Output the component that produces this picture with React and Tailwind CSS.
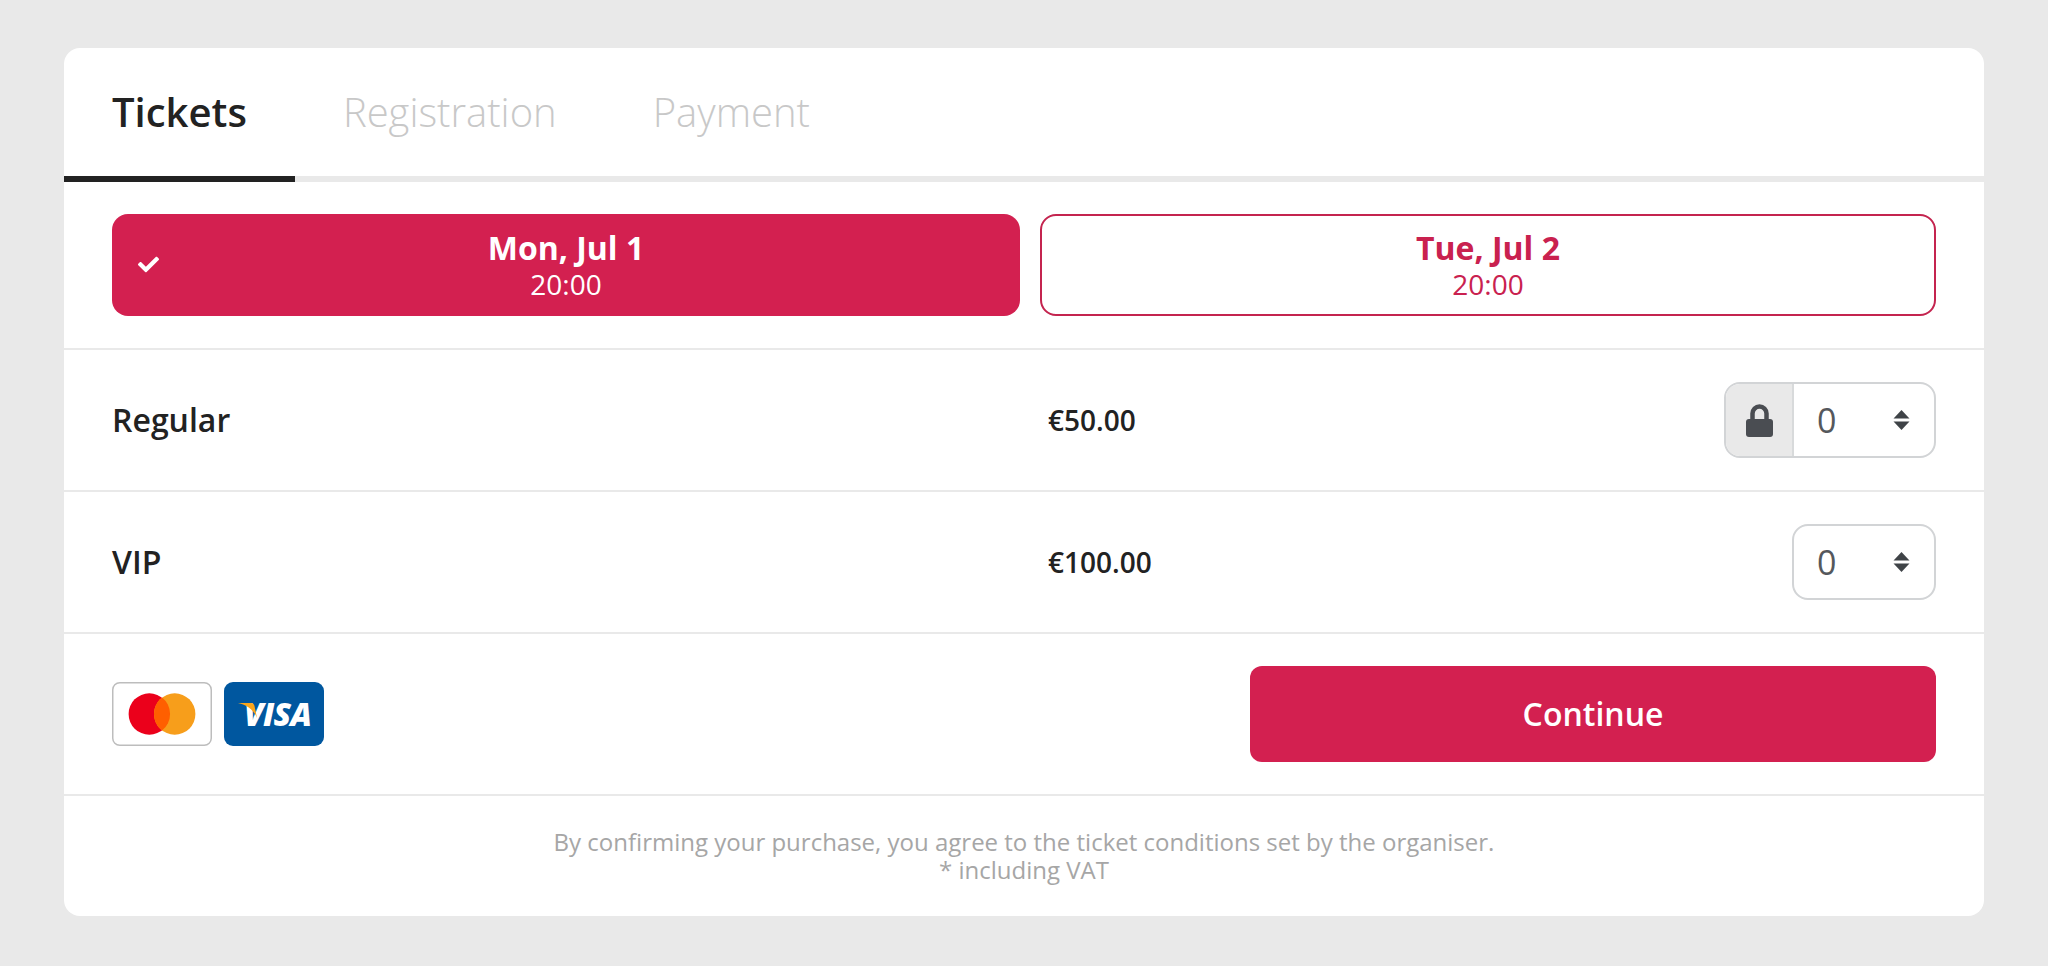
import React from 'react';
import { FaCheck } from 'react-icons/fa';

const tickets = [
  { name: 'Regular', price: '€50.00', locked: true },
  { name: 'VIP', price: '€100.00', locked: false },
];

const SortIcon = () => (
  <svg viewBox="0 0 17 20" className="h-[20px] w-[17px]" fill="#3f4347">
    <path d="M8.5 0 L16.5 8.5 H0.5 Z" />
    <path d="M8.5 20 L16.5 11.5 H0.5 Z" />
  </svg>
);

const LockIcon = () => (
  <svg viewBox="0 0 27 33" className="h-[33px] w-[27px]">
    <path d="M6.5 16 V9.5 a7 7 0 0 1 14 0 V16" fill="none" stroke="#4a4d52" strokeWidth="4.5" />
    <rect x="0" y="15" width="27" height="18" rx="3" fill="#4a4d52" />
  </svg>
);

const Stepper = ({ locked }) => (
  <div className="flex h-[76px] rounded-2xl border-2 border-[#d2d4d6] bg-white overflow-hidden">
    {locked && (
      <div className="flex w-[68px] items-center justify-center border-r-2 border-[#d8dadb] bg-[#e9e9e9]">
        <LockIcon />
      </div>
    )}
    <div className="flex w-[140px] items-center justify-between pl-[23px] pr-[24px] text-[34px] text-[#55585c]">
      <span>0</span>
      <SortIcon />
    </div>
  </div>
);

const MasterCard = () => (
  <svg viewBox="0 0 100 64" className="h-[64px] w-[100px]">
    <rect x="0.75" y="0.75" width="98.5" height="62.5" rx="7" fill="#fff" stroke="#bdbdbd" strokeWidth="1.5" />
    <circle cx="37.3" cy="32" r="20.7" fill="#eb001b" />
    <circle cx="62.7" cy="32" r="20.7" fill="#f79e1b" />
    <path d="M50 15.6 A20.7 20.7 0 0 1 50 48.4 A20.7 20.7 0 0 1 50 15.6 Z" fill="#ff5f00" />
  </svg>
);

const Visa = () => (
  <svg viewBox="0 0 100 64" className="h-[64px] w-[100px]">
    <rect width="100" height="64" rx="9" fill="#00579f" />
    <text x="53.5" y="44" textAnchor="middle" fontFamily="'Open Sans', sans-serif" fontWeight="800" fontStyle="italic" fontSize="32" fill="#fff" letterSpacing="-0.8">VISA</text>
    <path d="M14 21 H27 C29 21 30 22 30.5 24 L33 36 C30 28 23 23 14 21 Z" fill="#faa61a" />
  </svg>
);

export default function App() {
  return (
    <div className="min-h-screen bg-[#e9e9e9] px-[64px] py-[48px] font-['Open_Sans',sans-serif] text-[#222]">
      <div className="flex flex-col rounded-2xl bg-white overflow-hidden">
        {/* tabs */}
        <div className="flex border-b-[6px] border-[#e9e9e9] h-[134px]">
          <div className="relative flex h-[128px] items-center px-[48px] text-[40px] font-semibold">
            Tickets
            <div className="absolute bottom-[-6px] left-0 right-0 h-[6px] bg-[#222]"></div>
          </div>
          <div className="flex h-[128px] items-center px-[48px] text-[40px] font-light text-[#c8c8c8]">Registration</div>
          <div className="flex h-[128px] items-center px-[48px] text-[40px] font-light text-[#c8c8c8]">Payment</div>
        </div>

        {/* dates */}
        <div className="grid grid-cols-[908px_1fr] gap-[20px] border-b-2 border-[#e9e9e9] px-[48px] py-[32px]">
          <button className="relative flex h-[102px] flex-col items-center justify-center rounded-2xl bg-[#d32050] text-white">
            <FaCheck className="absolute left-[26px] top-[40px] h-[21px] w-[21px]" />
            <span className="text-[32px] font-bold leading-[38px]">Mon, Jul 1</span>
            <span className="text-[28px] leading-[34px]">20:00</span>
          </button>
          <button className="flex h-[102px] flex-col items-center justify-center rounded-2xl border-2 border-[#c4244f] bg-white text-[#c9214f]">
            <span className="text-[32px] font-bold leading-[38px]">Tue, Jul 2</span>
            <span className="text-[28px] leading-[34px]">20:00</span>
          </button>
        </div>

        {/* ticket rows */}
        {tickets.map((t) => (
          <div key={t.name} className="grid grid-cols-[936px_1fr_auto] items-center border-b-2 border-[#e9e9e9] px-[48px] py-[32px]">
            <span className="text-[32px] font-semibold">{t.name}</span>
            <span className="text-[28px] font-semibold">{t.price}</span>
            <Stepper locked={t.locked} />
          </div>
        ))}

        {/* payment + continue */}
        <div className="flex items-center justify-between border-b-2 border-[#e9e9e9] px-[48px] py-[32px]">
          <div className="flex gap-[12px]">
            <MasterCard />
            <Visa />
          </div>
          <button className="h-[96px] w-[686px] rounded-xl bg-[#d32050] text-[32px] font-semibold text-white">Continue</button>
        </div>

        {/* footer */}
        <div className="px-[48px] py-[32px] text-center text-[24px] leading-[28px] text-[#a6a6a6]">
          <p>By confirming your purchase, you agree to the ticket conditions set by the organiser.</p>
          <p>* including VAT</p>
        </div>
      </div>
    </div>
  );
}
